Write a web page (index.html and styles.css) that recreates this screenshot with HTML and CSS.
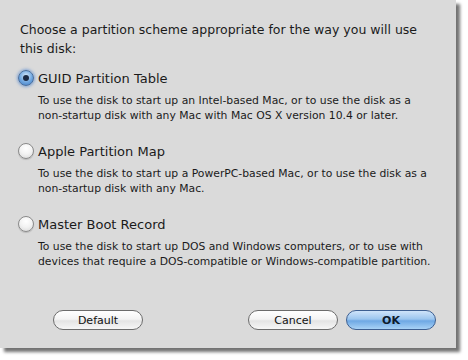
FILE: index.html
```html
<!DOCTYPE html>
<html lang="en">
<head>
    <meta charset="UTF-8">
    <title>Partition Options</title>
    <link rel="stylesheet" href="styles.css">
</head>
<body>
    <div class="sheet">
        <p class="prompt">Choose a partition scheme appropriate for the way you will use this disk:</p>

        <div class="option">
            <label class="radio-row">
                <span class="radio checked"></span>
                <span class="radio-label">GUID Partition Table</span>
            </label>
            <p class="desc">To use the disk to start up an Intel-based Mac, or to use the disk as a non&#8209;startup disk with any Mac with Mac OS X version 10.4 or later.</p>
        </div>

        <div class="option">
            <label class="radio-row">
                <span class="radio"></span>
                <span class="radio-label">Apple Partition Map</span>
            </label>
            <p class="desc">To use the disk to start up a PowerPC-based Mac, or to use the disk as a non&#8209;startup disk with any Mac.</p>
        </div>

        <div class="option">
            <label class="radio-row">
                <span class="radio"></span>
                <span class="radio-label">Master Boot Record</span>
            </label>
            <p class="desc">To use the disk to start up DOS and Windows computers, or to use with devices that require a DOS-compatible or Windows-compatible partition.</p>
        </div>

        <div class="buttons">
            <button class="btn">Default</button>
            <div class="spacer"></div>
            <button class="btn">Cancel</button>
            <button class="btn primary">OK</button>
        </div>
    </div>
</body>
</html>
```

FILE: styles.css
```css
* {
    margin: 0;
    padding: 0;
    box-sizing: border-box;
}

body {
    background: #ffffff;
    font-family: 'DejaVu Sans', Verdana, sans-serif;
    color: #1a1a1a;
    width: 468px;
    height: 360px;
    overflow: hidden;
}

.sheet {
    width: 456px;
    height: 348px;
    background: #dadada;
    padding: 20px 20px 0 20px;
    box-shadow: 4px 4px 3px rgba(0, 0, 0, 0.55);
    display: flex;
    flex-direction: column;
}

.prompt {
    font-size: 12.5px;
    line-height: 19px;
    margin-bottom: 11px;
}

.option {
    margin-bottom: 19px;
}

.radio-row {
    display: flex;
    align-items: center;
    gap: 4px;
    height: 18px;
}

.radio {
    width: 16px;
    height: 16px;
    border-radius: 50%;
    border: 1px solid #8a8a8a;
    background: radial-gradient(circle at 50% 30%, #ffffff 0%, #f2f2f2 50%, #d6d6d6 100%);
    box-shadow: 0 1px 1px rgba(0, 0, 0, 0.15);
    margin-left: -2px;
    position: relative;
}

.radio.checked {
    border-color: #4a6f9e;
    background: radial-gradient(circle at 50% 35%, #d6e9fb 0%, #6fa6df 55%, #3e78c0 100%);
    box-shadow: 0 0 3px 1px rgba(90, 140, 210, 0.7);
}

.radio.checked::after {
    content: '';
    position: absolute;
    left: 4px;
    top: 4px;
    width: 6px;
    height: 6px;
    border-radius: 50%;
    background: #1c2a44;
}

.radio-label {
    font-size: 13px;
}

.desc {
    font-size: 10.8px;
    line-height: 15px;
    margin-top: 6px;
    padding-left: 18px;
    margin-right: -8px;
}

.buttons {
    display: flex;
    align-items: center;
    margin-top: auto;
    margin-bottom: 18px;
    padding-left: 33px;
    gap: 8px;
}

.spacer {
    flex: 1;
}

.btn {
    width: 90px;
    height: 20px;
    border-radius: 10px;
    border: 1px solid #6c6c6c;
    background: linear-gradient(#ffffff 0%, #f4f4f4 45%, #e4e4e4 55%, #f6f6f6 100%);
    font-family: 'DejaVu Sans', Verdana, sans-serif;
    font-size: 11px;
    color: #111;
}

.btn.primary {
    border-color: #3d5f91;
    background: linear-gradient(#cfe4fa 0%, #9cc6ef 45%, #6ea8e4 55%, #a8d2f6 100%);
    font-weight: bold;
    color: #0d1a2c;
}
```
